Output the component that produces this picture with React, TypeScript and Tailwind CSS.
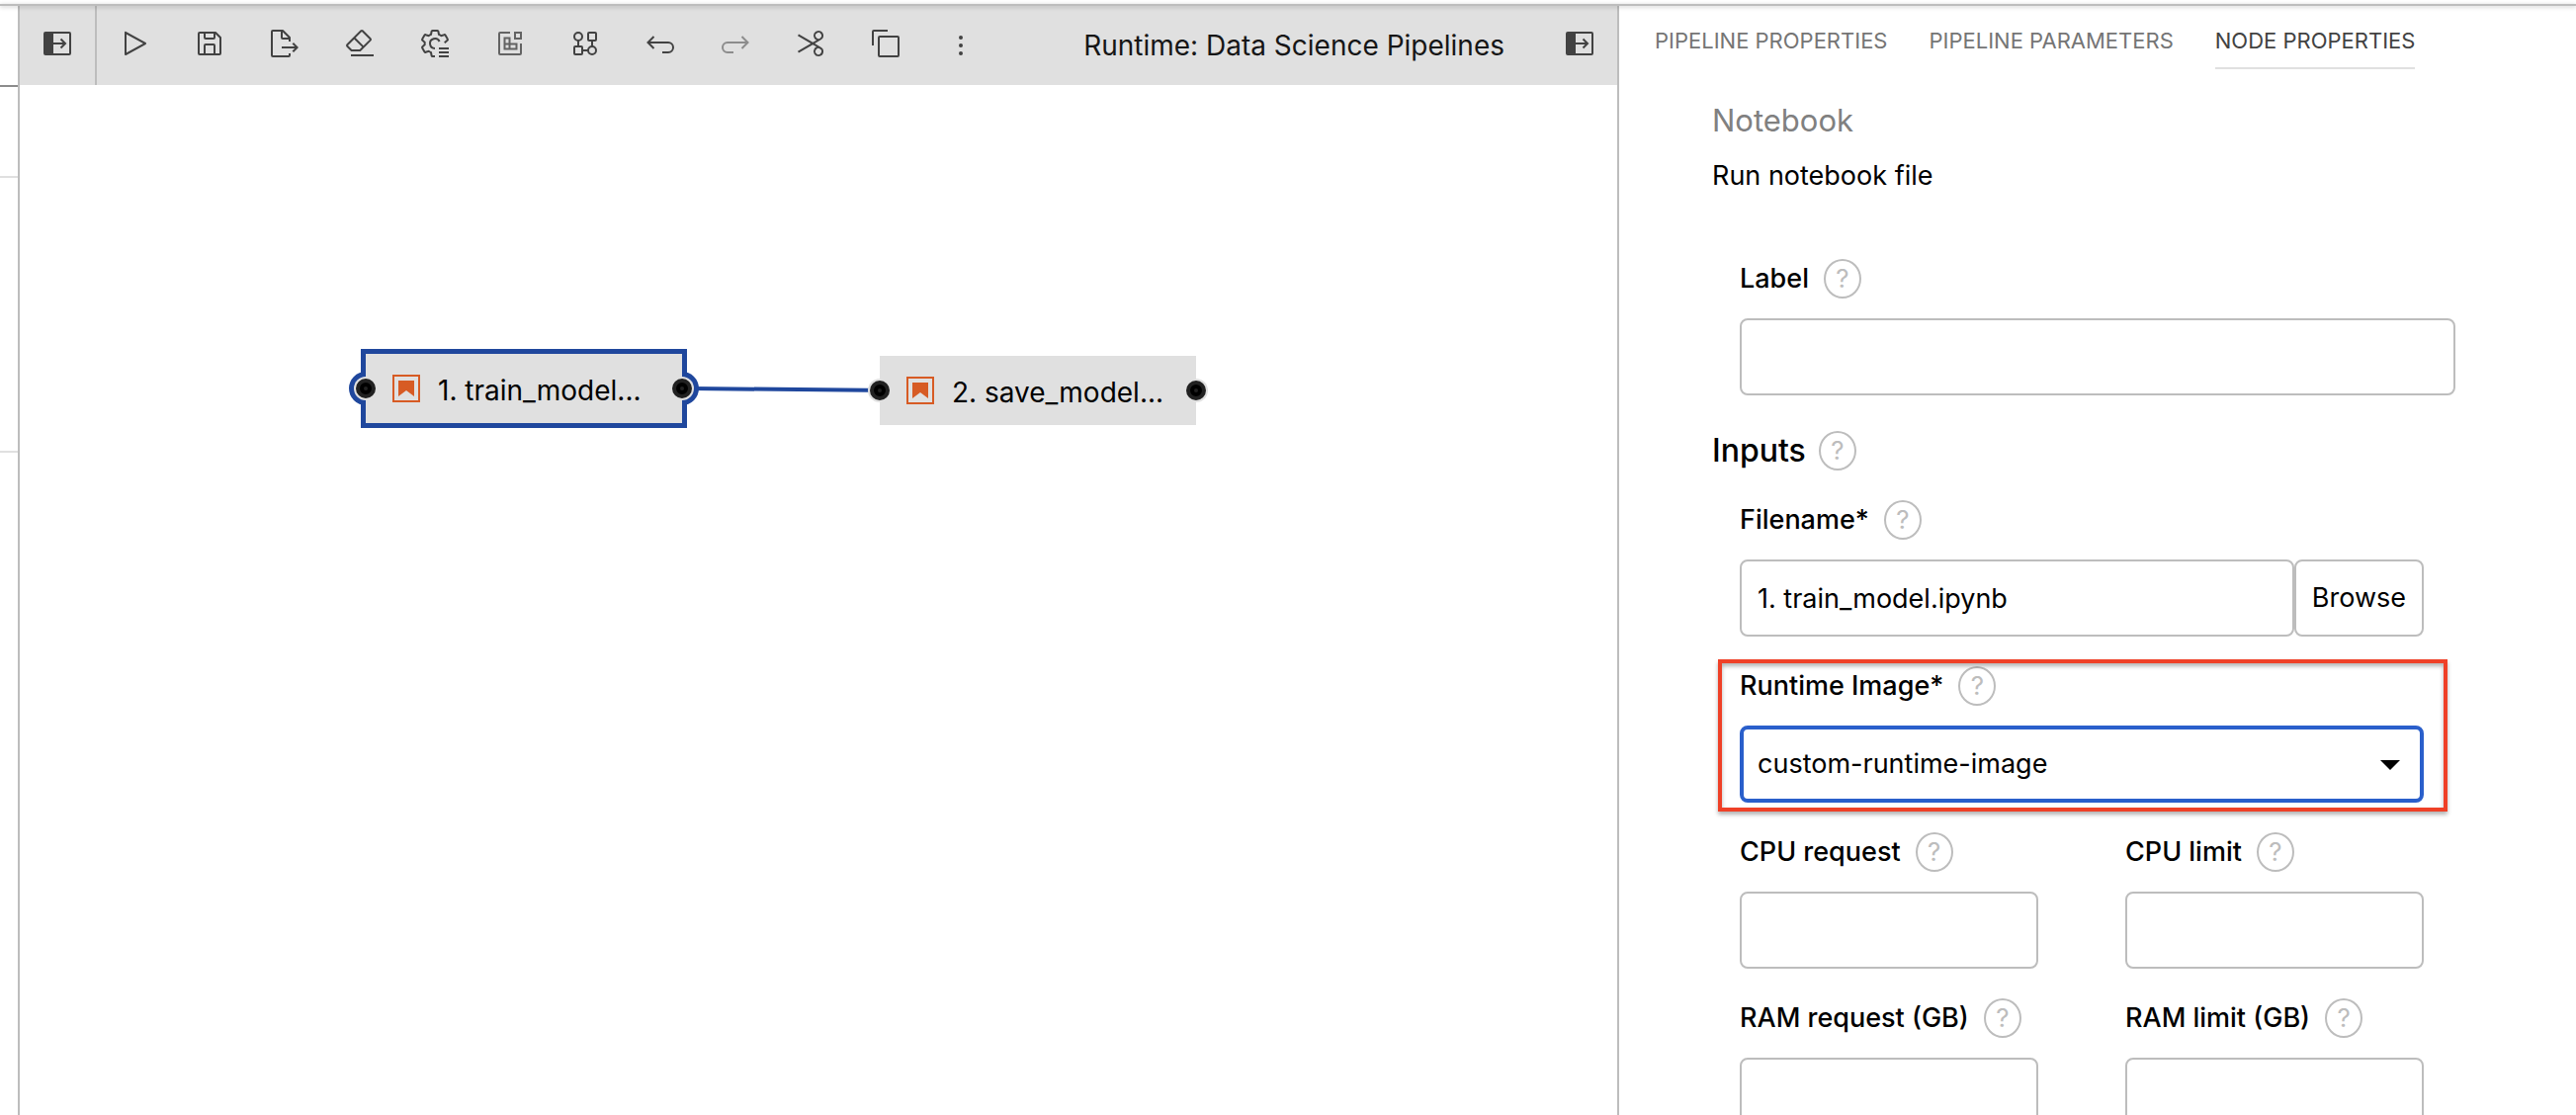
import type { ReactNode } from "react";

const toggle = (
  <>
    <rect x="3" y="5" width="26" height="22" rx="1" fill="none" stroke="currentColor" strokeWidth="2" />
    <path d="M3 5h9v22H3z" />
    <path d="M12 16h12M19.5 11.5L24 16l-4.5 4.5" fill="none" stroke="currentColor" strokeWidth="2" />
  </>
);

const line = { fill: "none", stroke: "currentColor", strokeWidth: 2 } as const;

const tools: { name: string; icon: ReactNode; tone?: string }[] = [
  {
    name: "Run pipeline",
    icon: (
      <path d="M7,28a1,1,0,0,1-1-1V5a1,1,0,0,1,1.4819-.8763l20,11a1,1,0,0,1,0,1.7525l-20,11A1.0005,1.0005,0,0,1,7,28ZM8,6.6909V25.3088L24.9248,16Z" />
    ),
  },
  {
    name: "Save pipeline",
    icon: (
      <path d="M27.71,9.29l-5-5A1,1,0,0,0,22,4H6A2,2,0,0,0,4,6V26a2,2,0,0,0,2,2H26a2,2,0,0,0,2-2V10A1,1,0,0,0,27.71,9.29ZM12,6h8v4H12Zm8,20H12V18h8Zm2,0V18a2,2,0,0,0-2-2H12a2,2,0,0,0-2,2v8H6V6h4v4a2,2,0,0,0,2,2h8a2,2,0,0,0,2-2V6.41l4,4V26Z" />
    ),
  },
  {
    name: "Export pipeline",
    icon: (
      <>
        <path d="M13 21L26.17 21 23.59 23.59 25 25 30 20 25 15 23.59 16.41 26.17 19 13 19 13 21z" />
        <path d="M22,14V10a1,1,0,0,0-.29-.71l-7-7A1,1,0,0,0,14,2H4A2,2,0,0,0,2,4V28a2,2,0,0,0,2,2H20a2,2,0,0,0,2-2V26H20v2H4V4h8v6a2,2,0,0,0,2,2h6v2Zm-8-4V4.41L19.59,10Z" />
      </>
    ),
  },
  {
    name: "Clear pipeline",
    icon: (
      <>
        <path d="M7 27H30V29H7z" />
        <path d="M27.38,10.51,19.45,2.59a2,2,0,0,0-2.83,0l-14,14a2,2,0,0,0,0,2.83L7.13,24h9.59L27.38,13.34A2,2,0,0,0,27.38,10.51ZM15.89,22H8L4,18l6.31-6.31,7.93,7.92Zm3.76-3.76-7.92-7.93L18,4,26,11.93Z" />
      </>
    ),
  },
  {
    name: "Open runtimes",
    icon: (
      <path
        {...line}
        d="M16 29h-2.4a1 1 0 0 1-1-.8l-.6-3.1c-.9-.3-1.7-.8-2.4-1.3l-2.9 1a1 1 0 0 1-1.2-.4l-2.3-3.9a1 1 0 0 1 .2-1.3l2.3-2c-.1-.8-.1-1.6 0-2.4l-2.3-2a1 1 0 0 1-.2-1.3l2.3-3.9a1 1 0 0 1 1.2-.4l2.9 1c.7-.5 1.5-1 2.4-1.3l.6-3.1a1 1 0 0 1 1-.8h4.8a1 1 0 0 1 1 .8l.6 3.1c.9.3 1.7.8 2.4 1.3l2.9-1a1 1 0 0 1 1.2.4l2.3 3.9a1 1 0 0 1-.2 1.3l-2.9 2.5M20.6 14A5 5 0 1 0 16 21M20 21h10M20 25h10M20 29h10"
      />
    ),
  },
  {
    name: "Open runtime images",
    tone: "text-[#636363]",
    icon: (
      <path {...line} d="M16 5H6a1 1 0 0 0-1 1v20a1 1 0 0 0 1 1h20a1 1 0 0 0 1-1V16M21 5h6v6h-6zM10.5 10.5h5v11h-5zM10.5 16.5h12v5h-12z" />
    ),
  },
  {
    name: "Open component catalogs",
    icon: (
      <>
        <circle {...line} cx="9" cy="9" r="4" />
        <circle {...line} cx="23" cy="23" r="4" />
        <rect {...line} x="19" y="5" width="8" height="8" rx="1" />
        <rect {...line} x="5" y="19" width="8" height="8" rx="1" />
        <path {...line} d="M9 13v6M23 13v6M13 23h6" />
      </>
    ),
  },
  { name: "Undo", icon: <path {...line} d="M4 15h20a5 5 0 0 1 0 10h-6M9.5 9l-6 6 6 6" /> },
  {
    name: "Redo",
    tone: "text-[#8c8c8c]",
    icon: <path {...line} d="M28 15H8a5 5 0 0 0 0 10h6M22.5 9l6 6-6 6" />,
  },
  {
    name: "Cut",
    icon: (
      <path d="M26.5,19.63,20.24,16l6.26-3.63a5,5,0,0,0-1.21-9.2A5.19,5.19,0,0,0,24,3a5,5,0,0,0-4.33,7.53,5,5,0,0,0,2.39,2.1l-3.82,2.21L4,6.6,3,8.34,16.24,16,3,23.68l1,1.74,14.24-8.26,3.82,2.21a5,5,0,0,0-2.39,2.1A5,5,0,0,0,24,29a5.19,5.19,0,0,0,1.29-.17,5,5,0,0,0,1.21-9.2ZM21.4,9.53a3,3,0,0,1,1.1-4.12,3,3,0,0,1,4.1,1.11,3,3,0,0,1-1.1,4.11h0A3,3,0,0,1,21.4,9.53Zm5.2,16a3,3,0,0,1-4.1,1.11,3,3,0,0,1-1.1-4.12,3,3,0,0,1,4.1-1.1h0A3,3,0,0,1,26.6,25.48Z" />
    ),
  },
  {
    name: "Copy",
    icon: (
      <>
        <path d="M28,10V28H10V10H28m0-2H10a2,2,0,0,0-2,2V28a2,2,0,0,0,2,2H28a2,2,0,0,0,2-2V10a2,2,0,0,0-2-2Z" />
        <path d="M4,18H2V4A2,2,0,0,1,4,2H18V4H4Z" />
      </>
    ),
  },
  {
    name: "More actions",
    icon: (
      <>
        <circle cx="16" cy="10" r="2" />
        <circle cx="16" cy="18" r="2" />
        <circle cx="16" cy="26" r="2" />
      </>
    ),
  },
];

function ToolButton({ name, icon, tone = "text-[#424242]" }: { name: string; icon: ReactNode; tone?: string }) {
  return (
    <button type="button" aria-label={name} className={`flex w-[76px] shrink-0 justify-center pt-[22px] ${tone}`}>
      <svg viewBox="0 0 32 32" className="size-8" fill="currentColor" aria-hidden="true">
        {icon}
      </svg>
    </button>
  );
}

function Port({ side }: { side: "left" | "right" }) {
  return (
    <span
      className={`absolute top-1/2 flex size-6 -translate-y-1/2 items-center justify-center rounded-full bg-[#e0e0e0] ${
        side === "left" ? "-left-3" : "-right-3"
      }`}
    >
      <span className="flex size-5 items-center justify-center rounded-full border-4 border-[#212121] bg-black">
        <span className="size-1 rounded-full bg-[#212121]" />
      </span>
    </span>
  );
}

function Node({ title, place, selected }: { title: string; place: string; selected?: boolean }) {
  return (
    <div className={`absolute h-[70px] w-[320px] ${place}`}>
      {selected && (
        <>
          <span className="absolute -left-[17px] top-1/2 size-[34px] -translate-y-1/2 rounded-full bg-[#1f479d]" />
          <span className="absolute -right-[17px] top-1/2 size-[34px] -translate-y-1/2 rounded-full bg-[#1f479d]" />
          <span className="absolute -inset-[5px] bg-[#1f479d]" />
        </>
      )}
      <div className="relative flex h-full items-center bg-[#e0e0e0] pl-[27px]">
        <svg viewBox="0 0 28 28" className="size-7 shrink-0" fill="#d75b24" aria-hidden="true">
          <path d="M1 1h26v26H1z" fill="none" stroke="#d75b24" strokeWidth="2" />
          <path d="M6 6h16v16l-8-6-8 6z" />
        </svg>
        <span className="pl-[18px] pt-1 text-[28px] leading-9 text-black">{title}</span>
        <Port side="left" />
        <Port side="right" />
      </div>
    </div>
  );
}

function Help({ about }: { about: string }) {
  return (
    <button
      type="button"
      aria-label={`Help: ${about}`}
      className="flex h-10 w-[38px] shrink-0 items-center justify-center rounded-[50%] border-2 border-[#bdbdbd] text-[26px] leading-none text-[#bdbdbd]"
    >
      ?
    </button>
  );
}

function FieldLabel({ id, text }: { id: string; text: string }) {
  return (
    <div className="mb-5 flex items-center gap-[15px]">
      <label htmlFor={id} className="text-[27px] font-medium leading-10">
        {text}
      </label>
      <Help about={text} />
    </div>
  );
}

const box = "h-[78px] w-full min-w-0 rounded-lg border-2 border-[#bdbdbd] bg-white px-4 text-[27px] outline-none";

function Field({ id, text }: { id: string; text: string }) {
  return (
    <div>
      <FieldLabel id={id} text={text} />
      <input id={id} type="text" className={box} />
    </div>
  );
}

function Tab({ text, active }: { text: string; active?: boolean }) {
  return (
    <button
      type="button"
      role="tab"
      aria-selected={active ? "true" : "false"}
      className={`h-12 whitespace-nowrap border-b-2 pb-2 ${
        active ? "border-[#e0e0e0] text-[#424242]" : "border-transparent"
      }`}
    >
      {text}
    </button>
  );
}

export default function App() {
  return (
    <div className="flex h-screen flex-col overflow-hidden bg-white pt-1 font-['Inter','Liberation_Sans',sans-serif] text-black">
      <div className="relative z-10 h-0.5 shrink-0 bg-[#bdbdbd] shadow-[0_1px_4px_rgba(0,0,0,0.25)]" />
      <div className="flex min-h-0 flex-1">
        <div className="flex w-5 shrink-0 flex-col border-r-2 border-[#bdbdbd]">
          <div className="h-[82px] border-b-2 border-[#8c8c8c]" />
          <div className="h-[92px] border-b-2 border-[#e0e0e0]" />
          <div className="h-[278px] border-b-2 border-[#e0e0e0]" />
        </div>

        <main className="flex min-w-0 flex-1 flex-col">
          <div role="toolbar" aria-label="Pipeline toolbar" className="flex h-20 shrink-0 bg-[#e0e0e0]">
            <div className="flex border-r-2 border-[#bdbdbd]">
              <ToolButton name="Open palette" icon={toggle} />
            </div>
            {tools.map((tool) => (
              <ToolButton key={tool.name} {...tool} />
            ))}
            <div className="ml-auto flex items-center whitespace-nowrap pr-[38px] text-[28px] text-[#161616]">
              Runtime: Data Science Pipelines
            </div>
            <ToolButton name="Toggle properties panel" icon={toggle} />
          </div>

          <div className="relative flex-1 overflow-hidden">
            <svg className="absolute left-[680px] top-[300px] h-5 w-[200px]" viewBox="0 0 200 20" aria-hidden="true">
              <path d="M0 7L200 9" stroke="#1f479d" strokeWidth="4" />
            </svg>
            <Node title="1. train_model..." place="left-[350px] top-[272px]" selected />
            <Node title="2. save_model..." place="left-[870px] top-[274px]" />
          </div>
        </main>

        <aside className="w-[970px] shrink-0 overflow-hidden border-l-2 border-[#bdbdbd]">
          <div role="tablist" className="flex gap-[42px] pl-9 pt-4 text-[22px] leading-[38px] text-[#757575]">
            <Tab text="PIPELINE PROPERTIES" />
            <Tab text="PIPELINE PARAMETERS" />
            <Tab text="NODE PROPERTIES" active />
          </div>

          <form className="pl-[94px] pr-[122px] pt-8">
            <h1 className="text-[31px] leading-10 text-[#808080]">Notebook</h1>
            <p className="mt-4 text-[27px] leading-10">Run notebook file</p>

            <div className="mt-16 pl-7">
              <Field id="label" text="Label" />
            </div>

            <div className="mt-9 flex items-center gap-[13px]">
              <h2 className="text-[32px] font-medium leading-10">Inputs</h2>
              <Help about="Inputs" />
            </div>

            <div className="mt-[30px] pl-7 pr-8">
              <FieldLabel id="filename" text="Filename*" />
              <div className="flex">
                <input id="filename" type="text" defaultValue="1. train_model.ipynb" className={box} />
                <button
                  type="button"
                  className="h-[78px] shrink-0 rounded-lg border-2 border-[#bdbdbd] px-4 text-[27px]"
                >
                  Browse
                </button>
              </div>

              <div className="relative mt-[30px]">
                <div className="pointer-events-none absolute -left-[22px] -right-6 -top-[7px] -bottom-[9px] border-4 border-[#ef4027] shadow-[0_3px_4px_rgba(0,0,0,0.3),inset_0_3px_4px_rgba(0,0,0,0.3)]" />
                <FieldLabel id="runtime-image" text="Runtime Image*" />
                <div className="relative">
                  <select
                    id="runtime-image"
                    defaultValue="custom-runtime-image"
                    className="block h-[78px] w-full appearance-none rounded-lg border-4 border-[#2a5fcb] bg-white px-[14px] text-[27px] outline-none"
                  >
                    <option>custom-runtime-image</option>
                  </select>
                  <svg
                    viewBox="0 0 20 10"
                    className="pointer-events-none absolute right-6 top-[35px] h-[10px] w-5"
                    aria-hidden="true"
                  >
                    <path d="M0 0h20L10 10z" />
                  </svg>
                </div>
              </div>

              <div className="mt-[30px] grid grid-cols-2 gap-x-[88px] gap-y-[30px]">
                <Field id="cpu-request" text="CPU request" />
                <Field id="cpu-limit" text="CPU limit" />
                <Field id="ram-request" text="RAM request (GB)" />
                <Field id="ram-limit" text="RAM limit (GB)" />
              </div>
            </div>
          </form>
        </aside>
      </div>
    </div>
  );
}
